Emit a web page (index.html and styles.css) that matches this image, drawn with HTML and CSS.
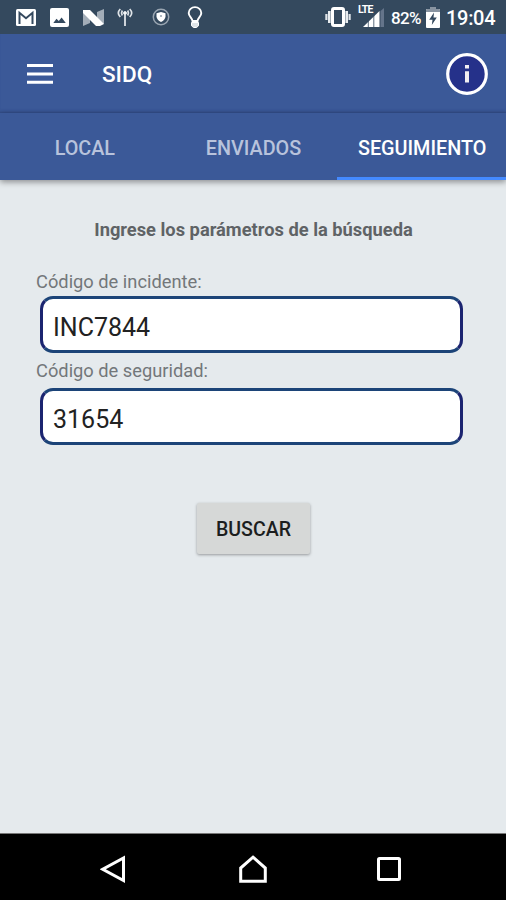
FILE: index.html
```html
<!DOCTYPE html>
<html lang="es">
<head>
  <meta charset="UTF-8">
  <meta name="viewport" content="width=device-width, initial-scale=1.0">
  <title>SIDQ</title>
  <link rel="stylesheet" href="styles.css">
</head>
<body>

  <div class="status-bar">
    <div class="notificaciones">
      <!-- correo -->
      <svg width="20" height="17" viewBox="0 0 20 17">
        <rect width="20" height="17" rx="1.5" fill="#fff"/>
        <path d="M3.5 15V3.8L10 9.2l6.5-5.4V15" fill="none" stroke="#34495e" stroke-width="2"/>
      </svg>
      <!-- imagen -->
      <svg class="imagen" width="19" height="19" viewBox="0 0 19 19">
        <rect width="19" height="19" rx="2" fill="#fff"/>
        <path d="M3.3 15l3.2-4.3 2.3 2.3 2.8-3.6 4.2 5.6z" fill="#34495e"/>
      </svg>
      <!-- nougat -->
      <svg class="nougat" width="21" height="17" viewBox="0 0 21 17">
        <path d="M0 2l7 3v9l-7 3zM14 3l7-3v15l-7-3z" fill="#a3adb8"/>
        <path d="M0 1h7l14 14-4 2h-4L0 4z" fill="#fff"/>
      </svg>
      <!-- antena -->
      <svg class="antena" width="16" height="18" viewBox="0 0 16 18" fill="none" stroke="#dfe4e8">
        <path d="M8 6v12" stroke-width="1.8"/>
        <path d="M5.3 2.5q-1.5 2.5 0 5M10.7 2.5q1.5 2.5 0 5M3.3 1q-4 4 0 8M12.7 1q4 4 0 8" stroke-width="1.7"/>
        <circle cx="8" cy="5" r="1.5" fill="#fff"/>
      </svg>
      <!-- escudo -->
      <svg class="escudo" width="18" height="18" viewBox="0 0 18 18">
        <circle cx="9" cy="9" r="7.7" fill="none" stroke="#9aa6b2" stroke-width="1.5"/>
        <path d="M9 4l4.5 1.3v3.5Q13 12.2 9 14 5 12.2 4.5 8.8V5.3z" fill="#fff"/>
        <circle cx="9" cy="8" r="1.1" fill="#9aa6b2"/>
      </svg>
      <!-- foco -->
      <svg class="foco" width="16" height="23" viewBox="0 0 16 23" fill="none" stroke="#fff">
        <path d="M5.5 15C5.2 12 1.7 10.5 1.7 7a6.3 5.9 0 0 1 12.6 0c0 3.5-3.5 5-3.8 8z" stroke-width="1.9"/>
        <path d="M4.5 16.5h7v3.3l-2 1.7h-3l-2-1.7z" fill="#dfe4e8" stroke-width="1"/>
      </svg>
    </div>
    <div class="sistema">
      <svg width="26" height="22" viewBox="0 0 26 22">
        <rect x="7.5" y="2.5" width="11" height="17" rx="1.5" fill="none" stroke="#fff" stroke-width="3"/>
        <path d="M4.3 5v12M21.7 5v12" stroke="#e8ecef" stroke-width="2.6"/>
        <path d="M1.4 8v6M24.6 8v6" stroke="#dfe4e8" stroke-width="2.2"/>
      </svg>
      <div class="red">
        <span class="lte">LTE</span>
        <svg width="21" height="19" viewBox="0 0 21 19">
          <path d="M17.500 3l3.500-3v19h-3.500z" fill="#64748a"/>
          <path d="M0 19L16.500 3v16z" fill="#fff"/>
          <path d="M5.3 12v7M10.8 7v12" stroke="#34495e" stroke-width=".8"/>
        </svg>
      </div>
      <span class="porcentaje">82%</span>
      <svg class="bateria" width="14" height="21" viewBox="0 0 14 21">
        <path d="M4 0h6v3H4z" fill="#8994a1"/>
        <rect y="2" width="14" height="19" rx="1" fill="#fff"/>
        <path d="M0 3q0-1 1-1h12q1 0 1 1v2H0z" fill="#8994a1"/>
        <path d="M8 5.5L3.2 12.8h3.3L5.8 18l5-7.5H7.5z" fill="#34495e"/>
      </svg>
      <span class="hora">19:04</span>
    </div>
  </div>

  <header class="toolbar">
    <svg width="26" height="20" viewBox="0 0 26 20">
      <path d="M0 1.5h26M0 10h26M0 18.3h26" stroke="#fff" stroke-width="3.1"/>
    </svg>
    <h1>SIDQ</h1>
    <svg class="info" width="42" height="42" viewBox="0 0 42 42">
      <circle cx="21" cy="21" r="19.3" fill="#25318a" stroke="#fff" stroke-width="3.2"/>
      <path d="M21 12v3.6M21 18.3v11.2" stroke="#f1edf2" stroke-width="4"/>
    </svg>
  </header>

  <nav class="tabs">
    <a class="tab">LOCAL</a>
    <a class="tab">ENVIADOS</a>
    <a class="tab activa">SEGUIMIENTO</a>
  </nav>

  <main>
    <h2>Ingrese los parámetros de la búsqueda</h2>
    <form>
      <label for="incidente">Código de incidente:</label>
      <input type="text" id="incidente" value="INC7844">
      <label for="seguridad" class="segundo">Código de seguridad:</label>
      <input type="text" id="seguridad" value="31654">
      <button type="button">BUSCAR</button>
    </form>
  </main>

  <footer class="navegacion">
    <svg width="26" height="30" viewBox="0 0 26 30">
      <path d="M23.5 4v22.500L2.800 15.200z"/>
    </svg>
    <svg class="inicio" width="30" height="30" viewBox="0 0 30 30">
      <path d="M15 3.2L27.3 14v13.3H2.7V14z"/>
    </svg>
    <svg width="26" height="30" viewBox="0 0 26 30">
      <rect x="2.5" y="4.5" width="21" height="21" rx="1"/>
    </svg>
  </footer>

</body>
</html>
```
FILE: styles.css
```css
* {
  box-sizing: border-box;
}

body {
  margin: 0;
  height: 900px;
  display: flex;
  flex-direction: column;
  overflow: hidden;
  background-color: #e5eaed;
  font-family: Roboto, "Liberation Sans", sans-serif;
}

svg {
  display: block;
  flex-shrink: 0;
}

.status-bar {
  height: 34px;
  padding: 0 11px 0 16px;
  display: flex;
  justify-content: space-between;
  align-items: center;
  background-color: #34495e;
  color: #fff;
}

.notificaciones, .sistema {
  display: flex;
  align-items: center;
}

.imagen {
  margin-left: 14px;
}

.nougat {
  margin-left: 14px;
}

.antena {
  margin-left: 13px;
}

.escudo {
  margin-left: 19px;
}

.foco {
  margin-left: 17px;
}

.red {
  position: relative;
  margin-left: 12px;
}

.lte {
  position: absolute;
  top: -4px;
  left: -5px;
  font-size: 10.5px;
  font-weight: 700;
  line-height: 12px;
  letter-spacing: -0.8px;
}

.porcentaje {
  margin: 2px 0 0 7px;
  width: 35px;
  font-size: 17px;
  font-weight: 500;
  letter-spacing: -0.7px;
}

.hora {
  margin: 2px 0 0 6px;
  width: 49px;
  font-size: 20px;
  font-weight: 500;
  letter-spacing: -0.3px;
}

.toolbar {
  height: 79px;
  padding: 0 18px 0 27px;
  display: flex;
  align-items: center;
  background-color: #3b5998;
  box-shadow: inset 0 -3px 3px -2px #304a82;
  color: #fff;
}

.toolbar h1 {
  margin: 1px 0 0 49px;
  font-size: 22.5px;
  font-weight: 500;
}

.info {
  margin-left: auto;
}

.tabs {
  height: 67px;
  display: grid;
  grid-template-columns: repeat(3, 1fr);
  background-color: #3b5998;
  box-shadow: 0 2px 6px rgba(0, 0, 0, 0.4);
}

.tab {
  padding: 6px 0 0 1px;
  display: flex;
  justify-content: center;
  align-items: center;
  border-bottom: 3px solid transparent;
  color: #b8c3dc;
  font-size: 19.8px;
  font-weight: 500;
}

.activa {
  color: #fff;
  border-bottom-color: #448aff;
}

main {
  flex: 1;
  padding: 37px 43px 0 36px;
}

h2 {
  margin: 0 0 28px;
  padding-left: 8px;
  color: #5f6366;
  font-size: 18.3px;
  font-weight: 700;
  line-height: 25px;
  text-align: center;
  white-space: nowrap;
}

form {
  display: flex;
  flex-direction: column;
}

label {
  height: 26px;
  color: #73777a;
  font-size: 18.3px;
  line-height: 24px;
}

.segundo {
  height: 29px;
  margin-top: 6px;
}

input {
  height: 57px;
  margin-left: 4px;
  padding: 5px 10px 0;
  border: 3px solid #1c4478;
  border-left-color: #1b2470;
  border-right-color: #1b2470;
  border-radius: 13px;
  background-color: #fff;
  color: #222;
  font-family: inherit;
  font-size: 25px;
}

button {
  align-self: center;
  width: 113px;
  height: 51px;
  margin: 58px 0 0 7px;
  padding: 1px 0 0 1px;
  border: none;
  border-radius: 2px;
  background-color: #d6d8d7;
  box-shadow: 0 1px 3px rgba(0, 0, 0, 0.35);
  color: #1c1e1e;
  font-family: inherit;
  font-size: 19.6px;
  font-weight: 500;
}

.navegacion {
  height: 67px;
  padding: 3px 104px 0 100px;
  display: flex;
  justify-content: space-between;
  align-items: center;
  border-top: 1px solid #777;
  background-color: #000;
}

.navegacion svg {
  fill: none;
  stroke: #fff;
  stroke-width: 3;
}

.navegacion .inicio {
  margin-left: 4px;
}
```
